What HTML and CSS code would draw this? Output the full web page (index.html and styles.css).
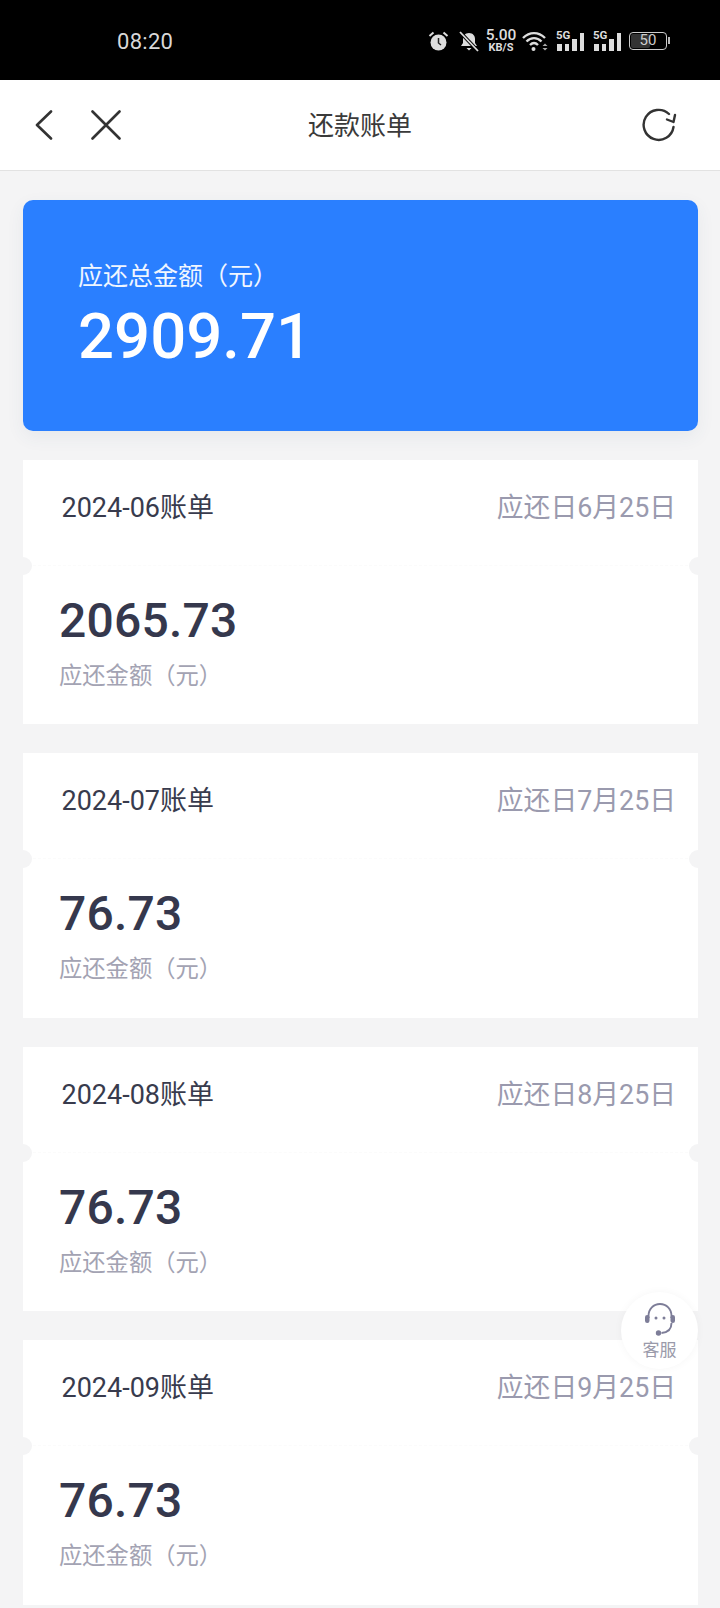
FILE: index.html
```html
<!DOCTYPE html>
<html lang="zh">
<head>
<meta charset="utf-8">
<title>还款账单</title>
<link rel="stylesheet" href="styles.css">
</head>
<body>
<div class="phone">
  <div class="status">
    <span class="time">08:20</span>
    <div class="status-icons">
      <svg class="ic alarm" width="22" height="22" viewBox="0 0 22 22"><circle cx="10.500" cy="12.500" r="8" fill="#ddd"/><path d="M10.500 8v5l2.500 2" fill="none" stroke="#222" stroke-width="1.500"/><path d="M1.500 6l4-3.500M19.500 6l-4-3.500" stroke="#ddd" stroke-width="2"/></svg>
      <svg class="ic bell" width="22" height="22" viewBox="0 0 22 22"><path d="M11 3c4 0 6 3 6 6v4l2 3H3l2-3V9c0-3 2-6 6-6zM8.500 18h5l-2.500 2.500z" fill="#ddd"/><path d="M2 2l18 19" stroke="#000" stroke-width="3.500"/><path d="M2 2l18 19" stroke="#ddd" stroke-width="1.800"/></svg>
      <div class="speed"><span class="speed-num">5.00</span><span class="speed-unit">KB/S</span></div>
      <svg class="ic wifi" width="26" height="22" viewBox="0 0 26 22"><path d="M1 8c6.500-6.500 15.500-6.500 22 0M4.500 11.500c4.500-4.500 10.500-4.500 15 0M8 15c2.500-2.500 5.500-2.500 8 0" fill="none" stroke="#ddd" stroke-width="2.400"/><circle cx="11.500" cy="19" r="2" fill="#ddd"/><path d="M23 13.500l2.500 2.500h-5zM23 20.500l2.500-2.500h-5z" fill="#aaa"/></svg>
      <div class="signal"><span class="sig-label">5G</span><i class="b1"></i><i class="b2"></i><i class="b3"></i><i class="b4"></i></div>
      <div class="signal"><span class="sig-label">5G</span><i class="b1"></i><i class="b2"></i><i class="b3"></i><i class="b4"></i></div>
      <div class="battery"><div class="battery-fill"></div><span class="battery-num">50</span></div>
    </div>
  </div>

  <header class="nav">
    <div class="nav-left">
      <svg width="20" height="30" viewBox="0 0 20 30"><path d="M17 1.500L3 15l14 13.500" fill="none" stroke="#333" stroke-width="2.600" stroke-linecap="round" stroke-linejoin="round"/></svg>
      <svg width="32" height="30" viewBox="0 0 32 30"><path d="M2.500 1.500l27 27M29.500 1.500l-27 27" fill="none" stroke="#333" stroke-width="2.600" stroke-linecap="round"/></svg>
    </div>
    <h1 class="nav-title">还款账单</h1>
    <svg class="nav-refresh" width="36" height="36" viewBox="0 0 36 36"><path d="M28 7A15 15 0 1 0 32.500 20" fill="none" stroke="#333" stroke-width="2.400" stroke-linecap="round"/><path d="M34 8L32.500 15L26 12.500" fill="none" stroke="#333" stroke-width="2.400" stroke-linecap="round" stroke-linejoin="round"/></svg>
  </header>

  <main class="content">
    <section class="hero">
      <div class="hero-label">应还总金额（元）</div>
      <div class="hero-amount">2909.71</div>
    </section>

    <article class="bill">
      <div class="bill-head"><span class="bill-month">2024-06账单</span><span class="bill-due">应还日6月25日</span></div>
      <div class="bill-body"><div class="bill-amount">2065.73</div><div class="bill-label">应还金额（元）</div></div>
    </article>
    <article class="bill">
      <div class="bill-head"><span class="bill-month">2024-07账单</span><span class="bill-due">应还日7月25日</span></div>
      <div class="bill-body"><div class="bill-amount">76.73</div><div class="bill-label">应还金额（元）</div></div>
    </article>
    <article class="bill">
      <div class="bill-head"><span class="bill-month">2024-08账单</span><span class="bill-due">应还日8月25日</span></div>
      <div class="bill-body"><div class="bill-amount">76.73</div><div class="bill-label">应还金额（元）</div></div>
    </article>
    <article class="bill">
      <div class="bill-head"><span class="bill-month">2024-09账单</span><span class="bill-due">应还日9月25日</span></div>
      <div class="bill-body"><div class="bill-amount">76.73</div><div class="bill-label">应还金额（元）</div></div>
    </article>
  </main>

  <div class="service">
    <svg width="34" height="36" viewBox="0 0 34 36"><path d="M5.500 16V14C5.500 7 10.500 2 17 2S28.500 7 28.500 14v2" fill="none" stroke="#7d7d98" stroke-width="1.900"/><rect x="2" y="13" width="4.500" height="8" rx="2.200" fill="#7d7d98"/><rect x="27.500" y="13" width="4.500" height="8" rx="2.200" fill="#7d7d98"/><path d="M28.500 21c0 6-4 9.500-10 10" fill="none" stroke="#7d7d98" stroke-width="1.900"/><circle cx="15.500" cy="31" r="2.700" fill="#7d7d98"/><circle cx="13" cy="16" r="1.500" fill="#7d7d98"/><circle cx="21" cy="16" r="1.500" fill="#7d7d98"/></svg>
    <span class="service-label">客服</span>
  </div>
</div>
</body>
</html>
```
FILE: styles.css
```css
* { box-sizing: border-box; }
html, body { margin: 0; padding: 0; }
body {
  font-family: Roboto, "Noto Sans CJK SC", sans-serif;
  background: #f4f4f5;
}
.phone { position: relative; width: 720px; height: 1608px; overflow: hidden; background: #f4f4f5; }

.status {
  height: 80px;
  background: #000;
  display: flex;
  align-items: center;
  justify-content: space-between;
  padding: 2px 53px 0 117px;
  color: #ddd;
}
.time { font-size: 22px; color: #d8d8d8; letter-spacing: 0.3px; }
.status-icons { display: flex; align-items: center; gap: 8px; }
.ic { display: block; }
.bell { margin-right: -2px; }
.speed { display: flex; flex-direction: column; align-items: center; width: 30px; line-height: 1; margin-right: -2px; }
.speed-num { font-size: 15.500px; font-weight: 500; line-height: 13px; }
.speed-unit { font-size: 11px; font-weight: 700; line-height: 10px; margin-top: 1px; }
.signal { position: relative; width: 28px; height: 20px; display: flex; align-items: flex-end; gap: 3px; padding-left: 1px; }
.signal + .signal { margin-left: 1px; }
.signal i { display: block; width: 4.500px; background: #ddd; }
.b1 { height: 7px; } .b2 { height: 7px; } .b3 { height: 12px; } .b4 { height: 18px; }
.sig-label { position: absolute; left: 0; top: -1px; font-size: 11.500px; font-weight: 700; line-height: 10px; }
.battery { position: relative; width: 38px; height: 18px; border: 1.500px solid #ccc; border-radius: 4px; }
.battery::after { content: ""; position: absolute; right: -4px; top: 4px; width: 2px; height: 7px; background: #bbb; }
.battery-fill { position: absolute; left: 1px; top: 1px; bottom: 1px; width: 19px; background: #333; border-radius: 2px; }
.battery-num { position: absolute; inset: 0; text-align: center; font-size: 15px; line-height: 15px; color: #ccc; }

.nav {
  position: relative;
  height: 91px;
  background: #fff;
  border-bottom: 1px solid #e2e2e2;
  display: flex;
  align-items: center;
  justify-content: space-between;
  padding: 0 43px 0 34px;
}
.nav-left { display: flex; align-items: center; gap: 36px; }
.nav-title {
  position: absolute;
  left: 0; right: 0;
  text-align: center;
  margin: 1px 0 0;
  font-size: 26px;
  font-weight: 400;
  color: #3a3a3a;
  line-height: 36px;
  pointer-events: none;
}
.nav-refresh { display: block; }

.content { padding: 29px 22px 0 23px; display: flex; flex-direction: column; gap: 29px; }
.hero {
  height: 231px;
  background: #2a7fff;
  border-radius: 10px;
  box-shadow: 0 6px 18px rgba(60, 80, 120, 0.07);
  padding: 60px 56px 0 55px;
  color: #fff;
}
.hero-label { font-size: 25px; line-height: 34px; color: #f0f6ff; }
.hero-amount { font-size: 63.500px; font-weight: 500; line-height: 76px; margin-top: 5px; }

.bill { position: relative; background: #fff; height: 264.400px; }
.bill::before, .bill::after {
  content: "";
  position: absolute;
  top: 97px;
  width: 18px;
  height: 18px;
  border-radius: 50%;
  background: #f4f4f5;
}
.bill::before { left: -9px; }
.bill::after { right: -9px; }
.bill-head {
  height: 106px;
  display: flex;
  justify-content: space-between;
  padding: 30px 22px 0 38.500px;
  align-items: flex-start;
  border-bottom: 1px dashed #fbfbfb;
}
.bill-month { font-size: 27px; line-height: 36px; color: #383b4d; }
.bill-due { font-size: 26.800px; line-height: 36px; color: #9a9aae; }
.bill-body { padding: 27px 36px 0; }
.bill-amount { font-size: 48px; font-weight: 500; line-height: 56px; color: #35384d; letter-spacing: 0.2px; }
.bill-label { font-size: 23.300px; line-height: 32px; color: #a3a3b3; margin-top: 11px; }

.service {
  position: absolute;
  left: 621px;
  top: 1292px;
  width: 77px;
  height: 77px;
  border-radius: 50%;
  background: #fff;
  box-shadow: 0 0 8px rgba(0, 0, 0, 0.04);
  display: flex;
  flex-direction: column;
  align-items: center;
  padding-top: 10px;
}
.service-label { font-size: 17px; line-height: 22px; color: #9a9aaa; margin-top: 1px; }
```
